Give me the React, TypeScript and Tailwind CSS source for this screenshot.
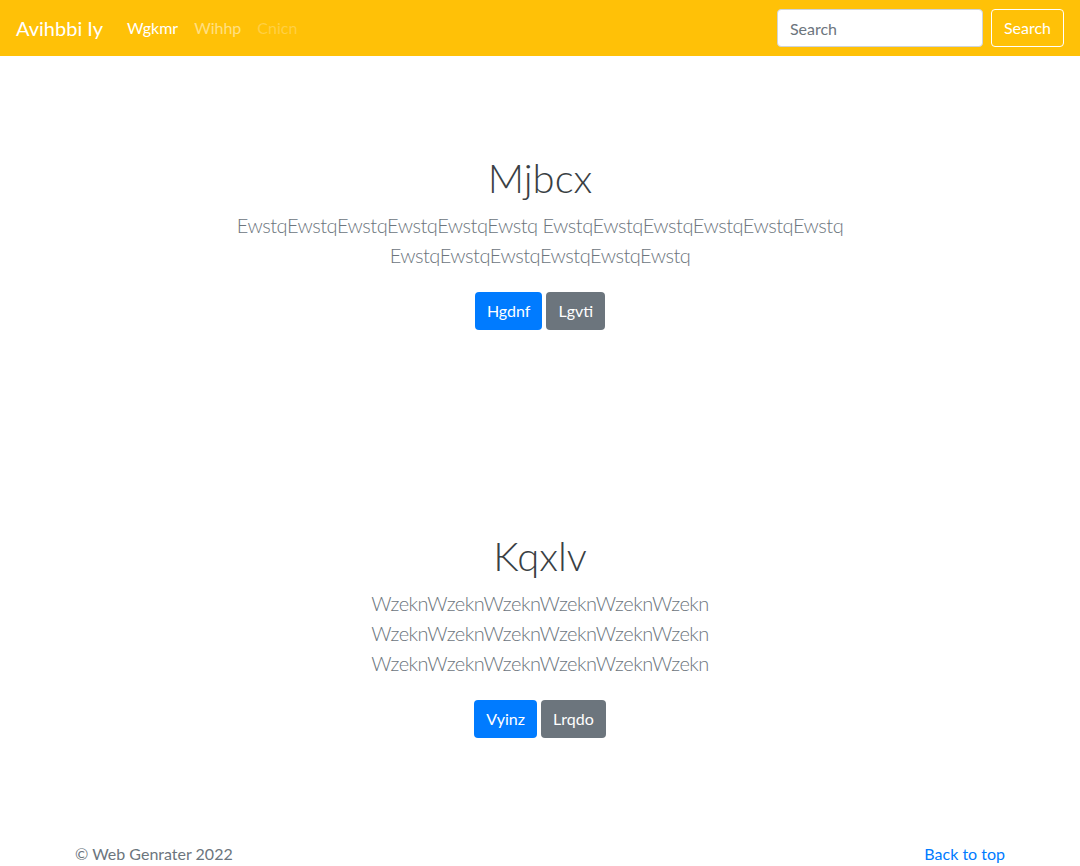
import React from "react";

const font = { fontFamily: '"Lato", "Noto Sans", sans-serif' };

function Section({ title, lines, b1, b2 }: { title: string; lines: string; b1: string; b2: string }) {
  return (
    <section className="pt-[98px] pb-[104px] text-center">
      <div className="mx-auto w-[650px]">
        <h1 className="text-[40px] leading-[48px] font-light text-[#3a3f44] mb-2">{title}</h1>
        <p className="text-[20px] leading-[30px] font-light text-[#6c757d] mb-4 tracking-[-0.5px]">{lines}</p>
        <p className="flex justify-center gap-[4px] mt-[22px]">
          <a className="inline-block px-3 h-[38px] leading-[38px] rounded bg-[#007bff] text-white text-[16px]">{b1}</a>
          <a className="inline-block px-3 h-[38px] leading-[38px] rounded bg-[#6c757d] text-white text-[16px]">{b2}</a>
        </p>
      </div>
    </section>
  );
}

export default function App() {
  const e = "EwstqEwstqEwstqEwstqEwstqEwstq";
  const w = "WzeknWzeknWzeknWzeknWzeknWzekn";
  return (
    <div style={font} className="bg-white min-h-[866px]">
      <nav className="h-[56px] bg-[#ffc107] flex items-center px-4">
        <a className="text-white text-[20px] leading-[30px] mr-4">Avihbbi Iy</a>
        <ul className="flex">
          <li><a className="px-2 text-white text-[16px]">Wgkmr</a></li>
          <li><a className="px-2 text-white/50 text-[16px]">Wihhp</a></li>
          <li><a className="px-2 text-white/25 text-[16px]">Cnicn</a></li>
        </ul>
        <div className="ml-auto flex items-center">
          <input
            placeholder="Search"
            className="w-[206px] h-[38px] px-3 rounded border border-[#ced4da] bg-white text-[16px] text-[#495057] placeholder:text-[#6c757d] mr-2 outline-none"
            style={font}
          />
          <button className="h-[38px] px-3 rounded border border-white text-white text-[16px]" style={font}>Search</button>
        </div>
      </nav>
      <main>
        <Section title="Mjbcx" lines={`${e} ${e} ${e}`} b1="Hgdnf" b2="Lgvti" />
        <Section title="Kqxlv" lines={`${w} ${w} ${w}`} b1="Vyinz" b2="Lrqdo" />
      </main>
      <footer className="mx-auto w-[960px] px-[15px] flex justify-between text-[16px] leading-[24px] text-[#6c757d]">
        <p>© Web Genrater 2022</p>
        <a className="text-[#007bff]">Back to top</a>
      </footer>
    </div>
  );
}
